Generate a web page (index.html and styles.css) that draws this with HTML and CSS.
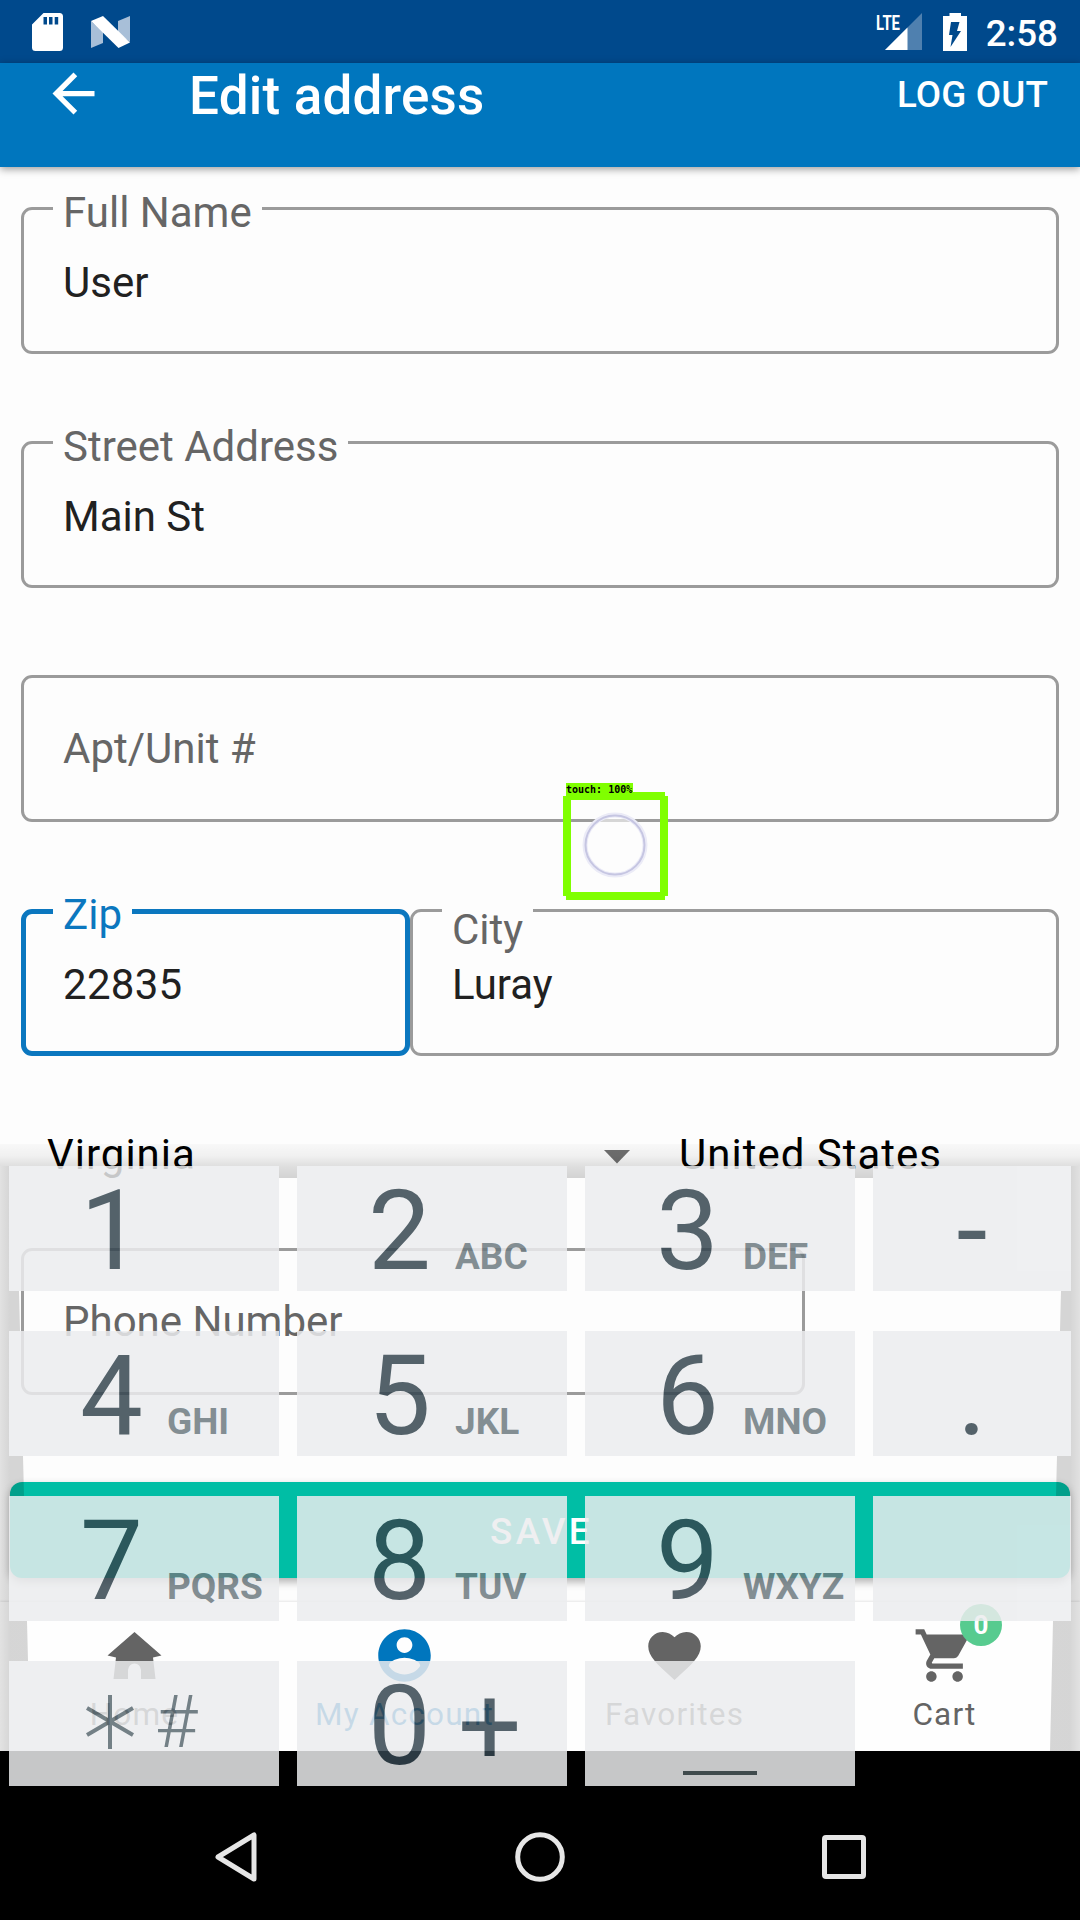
FILE: index.html
```html
<!DOCTYPE html>
<html lang="en">
<head>
<meta charset="utf-8">
<title>Edit address</title>
<link rel="stylesheet" href="styles.css">
</head>
<body>
<div class="screen">
  <header class="status-bar">
    <svg class="status-sd" width="31" height="38" viewBox="0 0 31 38"><path fill="#fff" fill-rule="evenodd" d="M11.500 0H27.500Q31 0 31 3.500V34.500Q31 38 27.500 38H3.500Q0 38 0 34.500V11.500ZM11.500 4V11.500H15V4ZM17 4V11.500H20.500V4ZM22.700 4V11.500H26.200V4Z"/></svg>
    <svg class="status-n" width="39" height="32" viewBox="0 0 39 32"><path fill="#a8bfd8" d="M0 5L12 16V27L0 32ZM27 5L39 0V26L27 17Z"/><path fill="#fff" d="M0 5L12 0L39 26.500L27.500 32Z"/></svg>
    <svg class="status-signal" width="47" height="38" viewBox="0 0 47 38"><path fill="#4f80af" d="M46 0V37H9Z"/><path fill="#fff" d="M9 37L31.500 14.500V37Z"/><path fill="#00498c" d="M0 0H26V15.500L22 19H0Z"/><text class="lte" x="0" y="16.500" textLength="24" lengthAdjust="spacingAndGlyphs">LTE</text></svg>
    <svg class="status-battery" width="24" height="38" viewBox="0 0 24 38"><path fill="#fff" d="M6.500 0H18V3H24V38H0V3H6.500Z"/><path fill="#00498c" d="M8 9H16.500L14 18H18L7.500 34L9.500 22H6Z"/></svg>
    <span class="clock">2:58</span>
  </header>

  <div class="app-bar">
    <svg class="back" width="63" height="63" viewBox="0 0 24 24"><path fill="#fff" d="M20 11H7.830l5.590-5.590L12 4l-8 8 8 8 1.410-1.410L7.830 13H20v-2z"/></svg>
    <h1 class="title">Edit address</h1>
    <span class="logout">LOG OUT</span>
  </div>

  <main class="form">
    <div class="field"><span class="label">Full Name</span><span class="value">User</span></div>
    <div class="field"><span class="label">Street Address</span><span class="value">Main St</span></div>
    <div class="field empty"><span class="value">Apt/Unit #</span></div>
    <div class="row">
      <div class="field zip"><span class="label">Zip</span><span class="value">22835</span></div>
      <div class="field city"><span class="label">City</span><span class="value">Luray</span></div>
    </div>
    <div class="selects">
      <div class="select state"><span>Virginia</span><svg width="26" height="14" viewBox="0 0 26 14"><path fill="#707070" d="M0 0H26L13 13.500Z"/></svg></div>
      <div class="select">United States</div>
    </div>
    <div class="field empty phone"><span class="value">Phone Number</span></div>
    <div class="save">SAVE</div>
  </main>

  <nav class="tabs">
    <div class="tab">
      <svg width="63" height="63" viewBox="0 0 63 63"><path fill="#646464" d="M31.500 8L58.500 31.500L50 33.500L52.500 55H38V46Q37 39.500 31.500 39.500Q26 39.500 25 46V55H10.500L13 33.500L4.500 31.500Z"/></svg>
      <span>Home</span>
    </div>
    <div class="tab active">
      <svg width="63" height="63" viewBox="0 0 24 24"><path fill="currentColor" d="M12 2C6.480 2 2 6.480 2 12s4.480 10 10 10 10-4.480 10-10S17.520 2 12 2zm0 3c1.660 0 3 1.340 3 3s-1.340 3-3 3-3-1.340-3-3 1.340-3 3-3zm0 14.200c-2.500 0-4.710-1.280-6-3.220.030-1.990 4-3.080 6-3.080 1.990 0 5.970 1.090 6 3.080-1.290 1.940-3.500 3.220-6 3.220z"/></svg>
      <span>My Account</span>
    </div>
    <div class="tab">
      <svg width="63" height="63" viewBox="0 0 24 24"><path fill="currentColor" d="M12 21.350l-1.450-1.320C5.400 15.360 2 12.280 2 8.500 2 5.420 4.420 3 7.500 3c1.740 0 3.410.810 4.500 2.090C13.090 3.810 14.760 3 16.500 3 19.580 3 22 5.420 22 8.500c0 3.780-3.400 6.860-8.550 11.540L12 21.350z"/></svg>
      <span>Favorites</span>
    </div>
    <div class="tab">
      <svg width="63" height="63" viewBox="0 0 24 24"><path fill="currentColor" d="M7 18c-1.100 0-1.990.900-1.990 2S5.900 22 7 22s2-.900 2-2-.900-2-2-2zM1 2v2h2l3.600 7.590-1.350 2.450c-.160.280-.250.610-.250.960 0 1.100.900 2 2 2h12v-2H7.420c-.140 0-.250-.110-.250-.250l.030-.120.900-1.630h7.450c.750 0 1.410-.410 1.750-1.030l3.580-6.490c.080-.140.120-.310.120-.480 0-.550-.450-1-1-1H5.210l-.940-2H1zm16 16c-1.100 0-1.990.900-1.990 2s.890 2 1.990 2 2-.900 2-2-.900-2-2-2z"/></svg>
      <span>Cart</span>
      <b class="badge">0</b>
    </div>
  </nav>

  <footer class="system-nav">
    <svg width="44" height="52" viewBox="0 0 44 52"><path fill="none" stroke="#e6e6e6" stroke-width="5" stroke-linejoin="round" d="M40 4V48L4 26Z"/></svg>
    <svg width="50" height="50" viewBox="0 0 50 50"><circle cx="25" cy="25" r="22.300" fill="none" stroke="#e6e6e6" stroke-width="5"/></svg>
    <svg width="44" height="44" viewBox="0 0 44 44"><rect x="2.500" y="2.500" width="39" height="39" rx="1.500" fill="none" stroke="#e6e6e6" stroke-width="5"/></svg>
  </footer>

  <svg class="keyboard-shadow" width="1080" height="607" viewBox="0 0 1080 607">
    <defs>
      <linearGradient id="top" gradientUnits="userSpaceOnUse" x1="0" y1="0" x2="0" y2="34"><stop offset="0" stop-color="#000" stop-opacity=".02"/><stop offset=".35" stop-color="#000" stop-opacity=".05"/><stop offset=".65" stop-color="#000" stop-opacity=".12"/><stop offset="1" stop-color="#000" stop-opacity=".17"/></linearGradient>
      <linearGradient id="left" gradientUnits="userSpaceOnUse" x1="0" y1="0" x2="20" y2="0"><stop offset="0" stop-color="#000" stop-opacity=".11"/><stop offset=".5" stop-color="#000" stop-opacity=".16"/></linearGradient>
      <linearGradient id="right" gradientUnits="userSpaceOnUse" x1="1080" y1="0" x2="1060" y2="0"><stop offset="0" stop-color="#000" stop-opacity=".11"/><stop offset=".5" stop-color="#000" stop-opacity=".16"/></linearGradient>
    </defs>
    <path fill="url(#top)" d="M0 0H1080V22H0ZM279 22H297V34H279ZM567 22H585V34H567ZM855 22H873V34H855Z"/>
    <path fill="url(#left)" d="M0 22H9V147H19L20 187H9V312H23L24 352H9V477H27L28 517H9V607H0Z"/>
    <path fill="url(#right)" d="M1080 22H1071V147H1061L1060 187H1071V312H1057L1056 352H1071V477H1053L1050 607H1080Z"/>
  </svg>

  <section class="keyboard">
    <div class="key"><span class="digit">1</span></div>
    <div class="key"><span class="digit">2</span><span class="letters">ABC</span></div>
    <div class="key"><span class="digit">3</span><span class="letters">DEF</span></div>
    <div class="key side"><span class="digit">-</span></div>
    <div class="key"><span class="digit">4</span><span class="letters">GHI</span></div>
    <div class="key"><span class="digit">5</span><span class="letters">JKL</span></div>
    <div class="key"><span class="digit">6</span><span class="letters">MNO</span></div>
    <div class="key side"><span class="digit">.</span></div>
    <div class="key"><span class="digit">7</span><span class="letters">PQRS</span></div>
    <div class="key"><span class="digit">8</span><span class="letters">TUV</span></div>
    <div class="key"><span class="digit">9</span><span class="letters">WXYZ</span></div>
    <div class="key side"></div>
    <div class="key symbols"><svg width="48" height="54" viewBox="0 0 48 54"><path stroke="#596870" stroke-width="4" d="M24 0V54M1 13L47 40M47 13L1 40"/></svg><span>#</span></div>
    <div class="key"><span class="digit">0</span><span class="digit plus">+</span></div>
    <div class="key space"><i class="space-mark"></i></div>
  </section>

  <div class="touch">
    <span class="touch-label">touch: 100%</span>
    <svg width="105" height="108" viewBox="0 0 105 108"><path fill="none" stroke="#80ff00" stroke-width="8" d="M3 4H102M3 104H102M4 4V104M101 4V104"/><circle cx="52" cy="53" r="30" fill="#fdfdfd" fill-opacity=".6" stroke="#ebebf7" stroke-width="5"/><circle cx="52" cy="53" r="29.500" fill="none" stroke="#c6c6e2" stroke-width="2"/></svg>
  </div>
</div>
</body>
</html>
```
FILE: styles.css
```css
* { box-sizing: border-box; }
body { margin: 0; font-family: Roboto, sans-serif; background: #000; }
svg { display: block; flex: none; }

.screen { position: relative; width: 1080px; height: 1920px; overflow: hidden; display: flex; flex-direction: column; background: #fdfdfd; }

.status-bar { height: 63px; flex: none; display: flex; align-items: center; padding: 0 22px 0 32px; background: #00498c; color: #fff; }
.status-n { margin-left: 28px; }
.status-signal { margin-left: auto; overflow: visible; }
.status-battery { margin-left: 20px; }
.lte { font: 700 21px Roboto, sans-serif; fill: #fff; }
.clock { margin-left: 19px; padding-top: 3px; font-size: 36.750px; font-weight: 500; line-height: 43px; }

.app-bar { height: 104px; flex: none; display: flex; align-items: flex-start; padding: 0 32px 0 42px; background: #0076be; color: #fff; box-shadow: 0 2px 8px rgba(0, 0, 0, .4); z-index: 1; }
.back { margin-top: -1px; }
.title { margin: 2px 0 0 84px; font-size: 53px; font-weight: 500; line-height: 62px; letter-spacing: .2px; }
.logout { margin: 10px 0 0 auto; font-size: 36.750px; font-weight: 500; line-height: 44px; letter-spacing: .150px; }

.form { height: 1435px; flex: none; padding: 40px 21px 0; }
.field { position: relative; height: 147px; display: flex; align-items: center; padding: 4px 39px 0; border: 3px solid #9b9b9b; border-radius: 11px; margin-bottom: 87px; font-size: 42px; line-height: 50px; color: #212121; }
.label { position: absolute; left: 29px; top: -22px; padding: 0 10px; background: #fdfdfd; color: #666; white-space: nowrap; }
.empty { color: #666; padding-top: 0; }
.row { display: flex; }
.row .field { margin-bottom: 0; }
.zip { width: 389px; border: 5px solid #0b77bf; padding: 4px 37px 0; }
.zip .value { letter-spacing: .3px; }
.zip .label { left: 27px; top: -24px; color: #0b77bf; }
.city { flex: 1; }
.city .label { top: -7px; }
.selects { height: 192px; display: flex; align-items: center; padding: 6px 0 0 26px; font-size: 42px; line-height: 50px; letter-spacing: 1px; color: #000; }
.state { width: 632px; display: flex; align-items: center; justify-content: space-between; padding: 0 49px 0 0; }
.state svg { margin-top: 3px; }
.phone { width: 784px; }
.save { height: 96px; margin: 0 -11px; padding: 2px 0 0 3px; display: flex; align-items: center; justify-content: center; border-radius: 12px; background: #00bea5; color: #fff; font-size: 36.750px; font-weight: 500; letter-spacing: 3.300px; box-shadow: 0 4px 8px rgba(0, 0, 0, .3); }

.tabs { height: 149px; flex: none; display: flex; background: #fefefe; box-shadow: 0 -1px 2px rgba(0, 0, 0, .09); }
.tab { position: relative; flex: 1; display: flex; flex-direction: column; align-items: center; padding: 22px 1px 0 0; color: #646464; font-size: 31.500px; line-height: 38px; letter-spacing: 1.200px; }
.tab span { margin-top: 9px; }
.active { color: #0076be; }
.badge { position: absolute; left: 150px; top: 2px; width: 42px; height: 42px; border-radius: 50%; background: #57cb8f; color: #fff; font-size: 26px; font-weight: 700; line-height: 43px; letter-spacing: 0; text-align: center; }

.system-nav { height: 169px; flex: none; display: flex; align-items: center; justify-content: space-between; padding: 43px 214px 0; background: #000; }

.keyboard-shadow { position: absolute; left: 0; top: 1144px; }
.keyboard { position: absolute; left: 9px; top: 1166px; display: grid; grid-template-columns: 270px 270px 270px 198px; grid-auto-rows: 125px; gap: 40px 18px; opacity: .84; }
.key { display: flex; align-items: baseline; padding-left: 71px; background: #ecedef; color: #34454f; }
.digit { width: 64px; font-size: 112px; line-height: 129px; }
.letters { margin-left: 23px; font-size: 37px; font-weight: 700; color: #6c797f; }
.side { justify-content: center; padding: 0; }
.side .digit { text-align: center; }
.plus { margin-left: 26px; }
.symbols { align-items: center; padding: 0 0 4px 77px; gap: 21px; font-size: 73px; font-weight: 300; color: #596870; }
.space { align-items: flex-end; padding: 0 0 11px 98px; }
.space-mark { width: 74px; height: 4px; background: #4d5a5c; }

.touch { position: absolute; left: 563px; top: 792px; }
.touch-label { position: absolute; left: 3px; top: -9px; width: 67px; height: 12px; background: #80ff00; color: #000; font: 700 10px/14px "DejaVu Sans Mono", monospace; white-space: nowrap; }
```
